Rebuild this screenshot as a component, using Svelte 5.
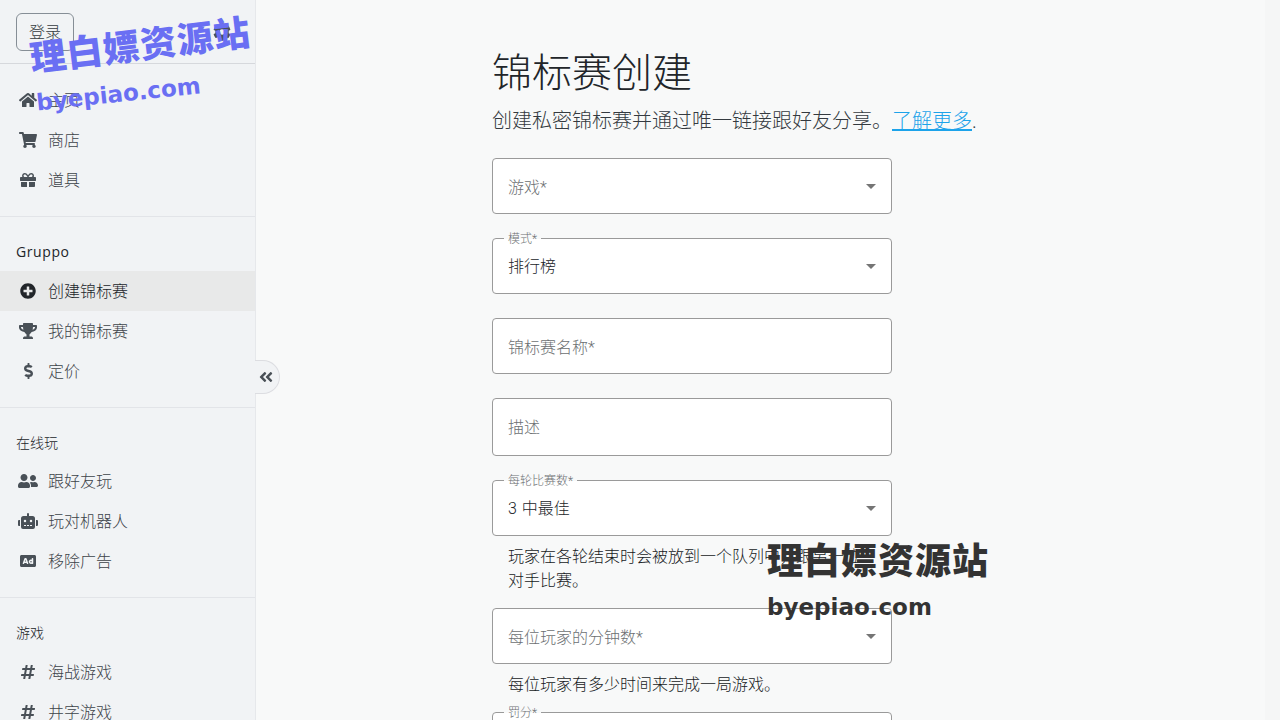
<script>
  const icons = {
    home: [576, 'M280.37 148.26L96 300.11V464a16 16 0 0 0 16 16l112.06-.29a16 16 0 0 0 15.92-16V368a16 16 0 0 1 16-16h64a16 16 0 0 1 16 16v95.64a16 16 0 0 0 16 16.05L464 480a16 16 0 0 0 16-16V300L295.67 148.26a12.19 12.19 0 0 0-15.3 0zM571.6 251.47L488 182.56V44.05a12 12 0 0 0-12-12h-56a12 12 0 0 0-12 12v72.61L318.47 43a48 48 0 0 0-61 0L4.34 251.47a12 12 0 0 0-1.6 16.9l25.5 31A12 12 0 0 0 45.15 301l235.22-193.74a12.19 12.19 0 0 1 15.3 0L530.9 301a12 12 0 0 0 16.9-1.6l25.5-31a12 12 0 0 0-1.7-16.93z'],
    cart: [576, 'M528.12 301.319l47.273-208C578.806 78.301 567.391 64 551.99 64H159.208l-9.166-44.81C147.758 8.021 137.93 0 126.529 0H24C10.745 0 0 10.745 0 24v16c0 13.255 10.745 24 24 24h69.883l70.248 343.435C147.325 417.1 136 435.222 136 456c0 30.928 25.072 56 56 56s56-25.072 56-56c0-15.674-6.447-29.835-16.824-40h209.647C430.447 426.165 424 440.326 424 456c0 30.928 25.072 56 56 56s56-25.072 56-56c0-22.172-12.888-41.332-31.579-50.405l5.517-24.276c3.413-15.018-8.002-29.319-23.403-29.319H218.117l-6.545-32h293.145c11.206 0 20.92-7.754 23.403-18.681z'],
    gift: [512, 'M32 448c0 17.7 14.3 32 32 32h160V320H32v128zm256 32h160c17.7 0 32-14.3 32-32V320H288v160zm192-320h-42.1c6.2-12.1 10.1-25.5 10.1-40 0-48.5-39.5-88-88-88-41.6 0-68.5 21.3-103 68.3-34.5-47-61.4-68.3-103-68.3-48.5 0-88 39.5-88 88 0 14.5 3.8 27.9 10.1 40H32c-17.7 0-32 14.3-32 32v80c0 8.8 7.2 16 16 16h480c8.8 0 16-7.2 16-16v-80c0-17.7-14.3-32-32-32zm-326.1 0c-22.1 0-40-17.9-40-40s17.9-40 40-40c19.9 0 34.6 3.3 86.1 80h-86.1zm206.1 0h-86.1c51.4-76.5 65.7-80 86.1-80 22.1 0 40 17.9 40 40s-17.9 40-40 40z'],
    plus: [512, 'M256 8C119 8 8 119 8 256s111 248 248 248 248-111 248-248S393 8 256 8zm144 276c0 6.6-5.4 12-12 12h-92v92c0 6.6-5.4 12-12 12h-56c-6.6 0-12-5.4-12-12v-92h-92c-6.6 0-12-5.4-12-12v-56c0-6.6 5.4-12 12-12h92v-92c0-6.6 5.4-12 12-12h56c6.6 0 12 5.4 12 12v92h92c6.6 0 12 5.4 12 12v56z'],
    trophy: [576, 'M552 64H448V24c0-13.3-10.7-24-24-24H152c-13.3 0-24 10.7-24 24v40H24C10.7 64 0 74.7 0 88v56c0 35.7 22.5 72.4 61.9 100.7 31.5 22.7 69.8 37.1 110 41.7C203.3 338.5 240 360 240 360v72h-48c-35.3 0-64 20.7-64 56v12c0 6.6 5.4 12 12 12h296c6.6 0 12-5.4 12-12v-12c0-35.3-28.7-56-64-56h-48v-72s36.7-21.5 68.1-73.6c40.3-4.6 78.6-19 110-41.7 39.3-28.3 61.9-65 61.9-100.7V88c0-13.3-10.7-24-24-24zM99.3 192.8C74.9 175.2 64 155.6 64 144v-16h64.2c1 32.6 5.8 61.2 12.8 86.2-15.1-5.2-29.2-12.4-41.7-21.4zM512 144c0 16.1-17.7 36.1-35.3 48.8-12.5 9-26.7 16.2-41.8 21.4 7-25 11.8-53.6 12.8-86.2H512v16z'],
    dollar: [288, 'M209.2 233.4l-108-31.6C88.7 198.2 80 186.5 80 173.5c0-16.3 13.2-29.5 29.5-29.5h66.3c12.2 0 24.2 3.7 34.2 10.5 6.1 4.1 14.3 3.1 19.5-2l34.8-34c7.1-6.9 6.1-18.4-1.8-24.5C238 74.8 207.4 64.1 176 64V16c0-8.8-7.2-16-16-16h-32c-8.8 0-16 7.2-16 16v48h-2.5C45.8 64-5.4 118.7.5 183.6c4.2 46.1 39.4 83.6 83.8 96.6l102.5 30c12.5 3.7 21.2 15.3 21.2 28.3 0 16.3-13.2 29.5-29.5 29.5h-66.3C100 368 88 364.3 78 357.5c-6.1-4.1-14.3-3.1-19.5 2l-34.8 34c-7.1 6.9-6.1 18.4 1.8 24.5 24.5 19.2 55.1 29.9 86.5 30v48c0 8.8 7.2 16 16 16h32c8.8 0 16-7.2 16-16v-48.2c46.6-.9 90.3-28.6 105.7-72.7 21.5-61.6-14.6-124.8-72.5-141.7z'],
    friends: [640, 'M192 256c61.9 0 112-50.1 112-112S253.9 32 192 32 80 82.1 80 144s50.1 112 112 112zm76.8 32h-8.3c-20.8 10-43.9 16-68.5 16s-47.6-6-68.5-16h-8.3C51.6 288 0 339.6 0 403.2V432c0 26.5 21.5 48 48 48h288c26.5 0 48-21.5 48-48v-28.8c0-63.6-51.6-115.2-115.2-115.2zM480 256c53 0 96-43 96-96s-43-96-96-96-96 43-96 96 43 96 96 96zm48 32h-3.8c-13.9 4.8-28.6 8-44.2 8s-30.3-3.2-44.2-8H432c-20.4 0-39.2 5.9-55.7 15.4 24.4 26.3 39.7 61.2 39.7 99.8v38.4c0 2.2-.5 4.3-.6 6.4H592c26.5 0 48-21.5 48-48 0-61.9-50.1-112-112-112z'],
    robot: [640, 'M32,224H64V416H32A31.96166,31.96166,0,0,1,0,384V256A31.96166,31.96166,0,0,1,32,224Zm512-48V448a64.06328,64.06328,0,0,1-64,64H160a64.06328,64.06328,0,0,1-64-64V176a79.974,79.974,0,0,1,80-80H288V32a32,32,0,0,1,64,0V96H464A79.974,79.974,0,0,1,544,176ZM264,256a40,40,0,1,0-40,40A39.997,39.997,0,0,0,264,256Zm-8,128H192v32h64Zm96,0H288v32h64ZM456,256a40,40,0,1,0-40,40A39.997,39.997,0,0,0,456,256Zm-8,128H384v32h64ZM640,256V384a31.96166,31.96166,0,0,1-32,32H576V224h32A31.96166,31.96166,0,0,1,640,256Z'],
    ad: [512, 'M157.52 272h36.96L176 218.78 157.52 272zM352 256c-13.23 0-24 10.77-24 24s10.77 24 24 24 24-10.77 24-24-10.77-24-24-24zM464 64H48C21.5 64 0 85.5 0 112v288c0 26.5 21.5 48 48 48h416c26.5 0 48-21.5 48-48V112c0-26.5-21.5-48-48-48zM250.58 352h-16.94c-6.81 0-12.88-4.32-15.12-10.75L211.15 320h-70.29l-7.38 21.25A16 16 0 0 1 118.36 352h-16.94c-11.01 0-18.73-10.85-15.12-21.25L140 176.12A23.995 23.995 0 0 1 162.67 160h26.66A23.99 23.99 0 0 1 212 176.13l53.69 154.62c3.61 10.4-4.11 21.25-15.11 21.25zM424 336c0 8.84-7.16 16-16 16h-16c-4.85 0-9.04-2.27-11.98-5.68-8.62 3.66-18.09 5.68-28.02 5.68-39.7 0-72-32.3-72-72s32.3-72 72-72c8.46 0 16.46 1.73 24 4.42V176c0-8.84 7.16-16 16-16h16c8.84 0 16 7.16 16 16v160z'],
    hash: [448, 'M440.667 182.109l7.143-40c1.313-7.355-4.342-14.109-11.813-14.109h-74.81l14.623-81.891C377.123 38.754 371.468 32 363.997 32h-40.632a12 12 0 0 0-11.813 9.891L296.175 128H197.54l14.623-81.891C213.477 38.754 207.822 32 200.35 32h-40.632a12 12 0 0 0-11.813 9.891L132.528 128H53.432a12 12 0 0 0-11.813 9.891l-7.143 40C33.163 185.246 38.818 192 46.289 192h74.81L98.242 320H19.146a12 12 0 0 0-11.813 9.891l-7.143 40C-1.123 377.246 4.532 384 12.003 384h74.81L72.19 465.891C70.877 473.246 76.532 480 84.003 480h40.632a12 12 0 0 0 11.813-9.891L151.826 384h98.634l-14.623 81.891C234.523 473.246 240.178 480 247.65 480h40.632a12 12 0 0 0 11.813-9.891L315.472 384h79.096a12 12 0 0 0 11.813-9.891l7.143-40c1.313-7.355-4.342-14.109-11.813-14.109h-74.81l22.857-128h79.096a12 12 0 0 0 11.813-9.891zM261.889 320h-98.634l22.857-128h98.634l-22.857 128z'],
    cog: [512, 'M487.4 315.7l-42.6-24.6c4.3-23.2 4.3-47 0-70.2l42.6-24.6c4.9-2.8 7.1-8.6 5.5-14-11.1-35.6-30-67.8-54.7-94.6-3.8-4.1-10-5.1-14.8-2.3L380.8 110c-17.9-15.4-38.5-27.3-60.8-35.1V25.8c0-5.6-3.9-10.5-9.4-11.7-36.7-8.2-74.3-7.8-109.2 0-5.5 1.2-9.4 6.1-9.4 11.7V75c-22.2 7.9-42.8 19.8-60.8 35.1L88.7 85.5c-4.9-2.8-11-1.9-14.8 2.3-24.7 26.7-43.6 58.9-54.7 94.6-1.7 5.4.6 11.2 5.5 14L67.3 221c-4.3 23.2-4.3 47 0 70.2l-42.6 24.6c-4.9 2.8-7.1 8.6-5.5 14 11.1 35.6 30 67.8 54.7 94.6 3.8 4.1 10 5.1 14.8 2.3l42.6-24.6c17.9 15.4 38.5 27.3 60.8 35.1v49.2c0 5.6 3.9 10.5 9.4 11.7 36.7 8.2 74.3 7.8 109.2 0 5.5-1.2 9.4-6.1 9.4-11.7v-49.2c22.2-7.9 42.8-19.8 60.8-35.1l42.6 24.6c4.9 2.8 11 1.9 14.8-2.3 24.7-26.7 43.6-58.9 54.7-94.6 1.5-5.5-.7-11.3-5.6-14.1zM256 336c-44.1 0-80-35.9-80-80s35.9-80 80-80 80 35.9 80 80-35.9 80-80 80z'],
    chevrons: [448, 'M223.7 239l136-136c9.4-9.4 24.6-9.4 33.9 0l22.6 22.6c9.4 9.4 9.4 24.6 0 33.9L319.9 256l96.4 96.4c9.4 9.4 9.4 24.6 0 33.9L393.7 409c-9.4 9.4-24.6 9.4-33.9 0l-136-136c-9.5-9.4-9.5-24.6-.1-34zm-192 34l136 136c9.4 9.4 24.6 9.4 33.9 0l22.6-22.6c9.4-9.4 9.4-24.6 0-33.9L127.9 256l96.4-96.4c9.4-9.4 9.4-24.6 0-33.9L201.7 103c-9.4-9.4-24.6-9.4-33.9 0l-136 136c-9.5 9.4-9.5 24.6-.1 34z'],
  };

  const nav = [
    { items: [['home', '主页'], ['cart', '商店'], ['gift', '道具']] },
    { title: 'Gruppo', latin: true, items: [['plus', '创建锦标赛', true], ['trophy', '我的锦标赛'], ['dollar', '定价']] },
    { title: '在线玩', items: [['friends', '跟好友玩'], ['robot', '玩对机器人'], ['ad', '移除广告']] },
    { title: '游戏', items: [['hash', '海战游戏'], ['hash', '井字游戏']] },
  ];

  const fields = [
    { placeholder: '游戏*', select: true },
    { label: '模式*', value: '排行榜', select: true },
    { placeholder: '锦标赛名称*' },
    { placeholder: '描述', tall: true },
    { label: '每轮比赛数*', value: '3 中最佳', select: true, help: '玩家在各轮结束时会被放到一个队列中，跟另一位对手比赛。' },
    { placeholder: '每位玩家的分钟数*', select: true, help: '每位玩家有多少时间来完成一局游戏。' },
    { label: '罚分*', value: '', select: true },
  ];
</script>

{#snippet icon(name, size = 16)}
  <svg class="ico" viewBox="0 0 {icons[name][0]} 512" height={size} width={icons[name][0] / 512 * size} fill="currentColor">
    <path d={icons[name][1]} />
  </svg>
{/snippet}

<div class="page">
  <aside class="sidebar">
    <div class="topbar">
      <button class="login">登录</button>
      <span class="cog">{@render icon('cog', 18)}</span>
    </div>
    {#each nav as section, i}
      <nav class="section" class:first={i === 0}>
        {#if section.title}
          <div class="section-title" class:latin={section.latin}>{section.title}</div>
        {/if}
        {#each section.items as [ic, text, active]}
          <div class="nav-row" class:active>
            <span class="nav-icon">{@render icon(ic)}</span>
            <span class="nav-text">{text}</span>
          </div>
        {/each}
      </nav>
    {/each}
  </aside>

  <button class="collapse" aria-label="collapse">{@render icon('chevrons')}</button>

  <main class="main">
    <div class="content">
      <h1>锦标赛创建</h1>
      <p class="subtitle">创建私密锦标赛并通过唯一链接跟好友分享。<a href="#more">了解更多</a>.</p>

      <div class="fields">
        {#each fields as f}
          <div class="field-wrap">
            <div class="field" class:tall={f.tall}>
              {#if f.label}
                <span class="float-label">{f.label}</span>
              {/if}
              {#if f.value}
                <span class="value">{f.value}</span>
              {:else if f.placeholder}
                <span class="placeholder">{f.placeholder}</span>
              {/if}
              {#if f.select}
                <span class="caret"></span>
              {/if}
            </div>
            {#if f.help}
              <p class="help">{f.help}</p>
            {/if}
          </div>
        {/each}
      </div>
    </div>
  </main>

  <div class="scroll-strip"></div>

  <div class="wm wm-blue">
    <div class="wm-cn">理白嫖资源站</div>
    <div class="wm-en">byepiao.com</div>
  </div>
  <div class="wm wm-dark">
    <div class="wm-cn">理白嫖资源站</div>
    <div class="wm-en">byepiao.com</div>
  </div>
</div>

<style>
  :global(body) {
    margin: 0;
    background: #f8f9f9;
    font-family: Roboto, "Noto Sans CJK SC", sans-serif;
    color: #212529;
  }

  .page {
    position: relative;
    display: flex;
    height: 720px;
    overflow: hidden;
  }

  .ico {
    display: block;
  }

  .sidebar {
    flex: none;
    box-sizing: border-box;
    width: 256px;
    height: 720px;
    overflow: hidden;
    background: #f1f3f5;
    border-right: 1px solid #e6e8eb;
  }

  .topbar {
    box-sizing: border-box;
    height: 64px;
    display: flex;
    align-items: center;
    justify-content: space-between;
    padding: 1px 24px 0 16px;
    border-bottom: 1px solid #d6d8dc;
  }

  .login {
    box-sizing: border-box;
    width: 58px;
    height: 38px;
    padding: 1px 0 0;
    background: transparent;
    border: 1px solid #868e96;
    border-radius: 6px;
    font: inherit;
    font-size: 16px;
    font-weight: 300;
    line-height: 24px;
    color: #343a40;
  }

  .cog {
    color: #495057;
  }

  .section {
    padding: 0 0 16px;
    border-bottom: 1px solid #e2e4e8;
  }

  .section.first {
    padding-top: 16px;
  }

  .section-title {
    box-sizing: border-box;
    height: 53.5px;
    padding: 26px 16px 0;
    font-size: 14px;
    line-height: 18px;
    color: #212529;
    font-weight: 300;
  }

  .section-title.latin {
    font-family: "Open Sans", sans-serif;
    font-weight: 400;
    letter-spacing: 0.6px;
  }

  .nav-row {
    display: flex;
    align-items: center;
    gap: 8px;
    height: 40px;
    padding-left: 16px;
    font-size: 16px;
    font-weight: 300;
    color: #3d4349;
  }

  .nav-text {
    padding-bottom: 2px;
  }

  .nav-row.active {
    background: #e8e9e9;
    color: #212529;
  }

  .nav-icon {
    width: 24px;
    display: flex;
    justify-content: center;
    color: #495057;
  }

  .nav-row.active .nav-icon {
    color: #212529;
  }

  .collapse {
    position: absolute;
    left: 255px;
    top: 360px;
    box-sizing: border-box;
    width: 25px;
    height: 34px;
    padding: 0 2px 0 0;
    display: flex;
    align-items: center;
    justify-content: center;
    background: #f1f3f5;
    border: 1px solid #dcdde1;
    border-left: none;
    border-radius: 0 17px 17px 0;
    color: #495057;
  }

  .main {
    flex: 1;
    height: 720px;
    overflow: hidden;
  }

  .content {
    width: 552px;
    margin: 0 auto;
    padding-top: 50px;
  }

  h1 {
    margin: 0 0 9px;
    font-size: 40px;
    line-height: 48px;
    font-weight: 300;
    color: #212529;
  }

  .subtitle {
    margin: 0 0 23px;
    font-size: 20px;
    line-height: 28px;
    font-weight: 300;
    color: #343a40;
  }

  .subtitle a {
    color: #1ca3ea;
    text-decoration: underline;
    text-decoration-thickness: 2px;
  }

  .fields {
    display: flex;
    flex-direction: column;
    gap: 24px;
    width: 400px;
  }

  .field-wrap {
    display: flex;
    flex-direction: column;
  }

  .field {
    position: relative;
    box-sizing: border-box;
    height: 56px;
    display: flex;
    align-items: center;
    justify-content: space-between;
    padding: 2px 15px 0 15px;
    background: #fff;
    border: 1px solid #9a9a9a;
    border-radius: 4px;
    font-size: 16px;
    font-weight: 300;
    line-height: 24px;
  }

  .field.tall {
    height: 58px;
  }

  .value {
    color: #212529;
    word-spacing: 1px;
  }

  .placeholder {
    padding-top: 2px;
    color: #6c6f72;
  }

  .field.tall .placeholder {
    padding-top: 0;
  }

  .float-label {
    position: absolute;
    left: 11px;
    top: -7px;
    padding: 0 4px;
    font-size: 12px;
    line-height: 14px;
    color: #6c6f72;
    background: linear-gradient(#f8f9f9 50%, #fff 50%);
  }

  .caret {
    margin: -2px 0 0 auto;
    width: 0;
    height: 0;
    border-left: 5px solid transparent;
    border-right: 5px solid transparent;
    border-top: 5px solid #757575;
  }

  .help {
    margin: 9px 0 -9px;
    padding: 0 24px 0 16px;
    font-size: 16px;
    font-weight: 300;
    line-height: 24px;
    color: #16191c;
  }

  .scroll-strip {
    position: absolute;
    top: 0;
    right: 0;
    bottom: 0;
    width: 15px;
    background: #f5f6f6;
  }

  .wm {
    position: absolute;
    white-space: nowrap;
    font-weight: 900;
  }

  .wm-cn {
    font-family: "Noto Sans CJK SC", sans-serif;
    font-size: 36px;
    line-height: 44px;
    letter-spacing: 1px;
  }

  .wm-en {
    font-family: "DejaVu Sans", sans-serif;
    font-weight: 700;
    font-size: 23px;
    line-height: 30px;
  }

  .wm-blue {
    left: 27px;
    top: 34px;
    color: #6a6ff3;
    transform: rotate(-7deg);
    transform-origin: left top;
  }

  .wm-blue .wm-en {
    margin: 12px 0 0 1px;
    transform: rotate(1deg);
  }

  .wm-dark {
    left: 767px;
    top: 536px;
    color: #333;
  }

  .wm-dark .wm-en {
    margin-top: 12px;
  }
</style>
